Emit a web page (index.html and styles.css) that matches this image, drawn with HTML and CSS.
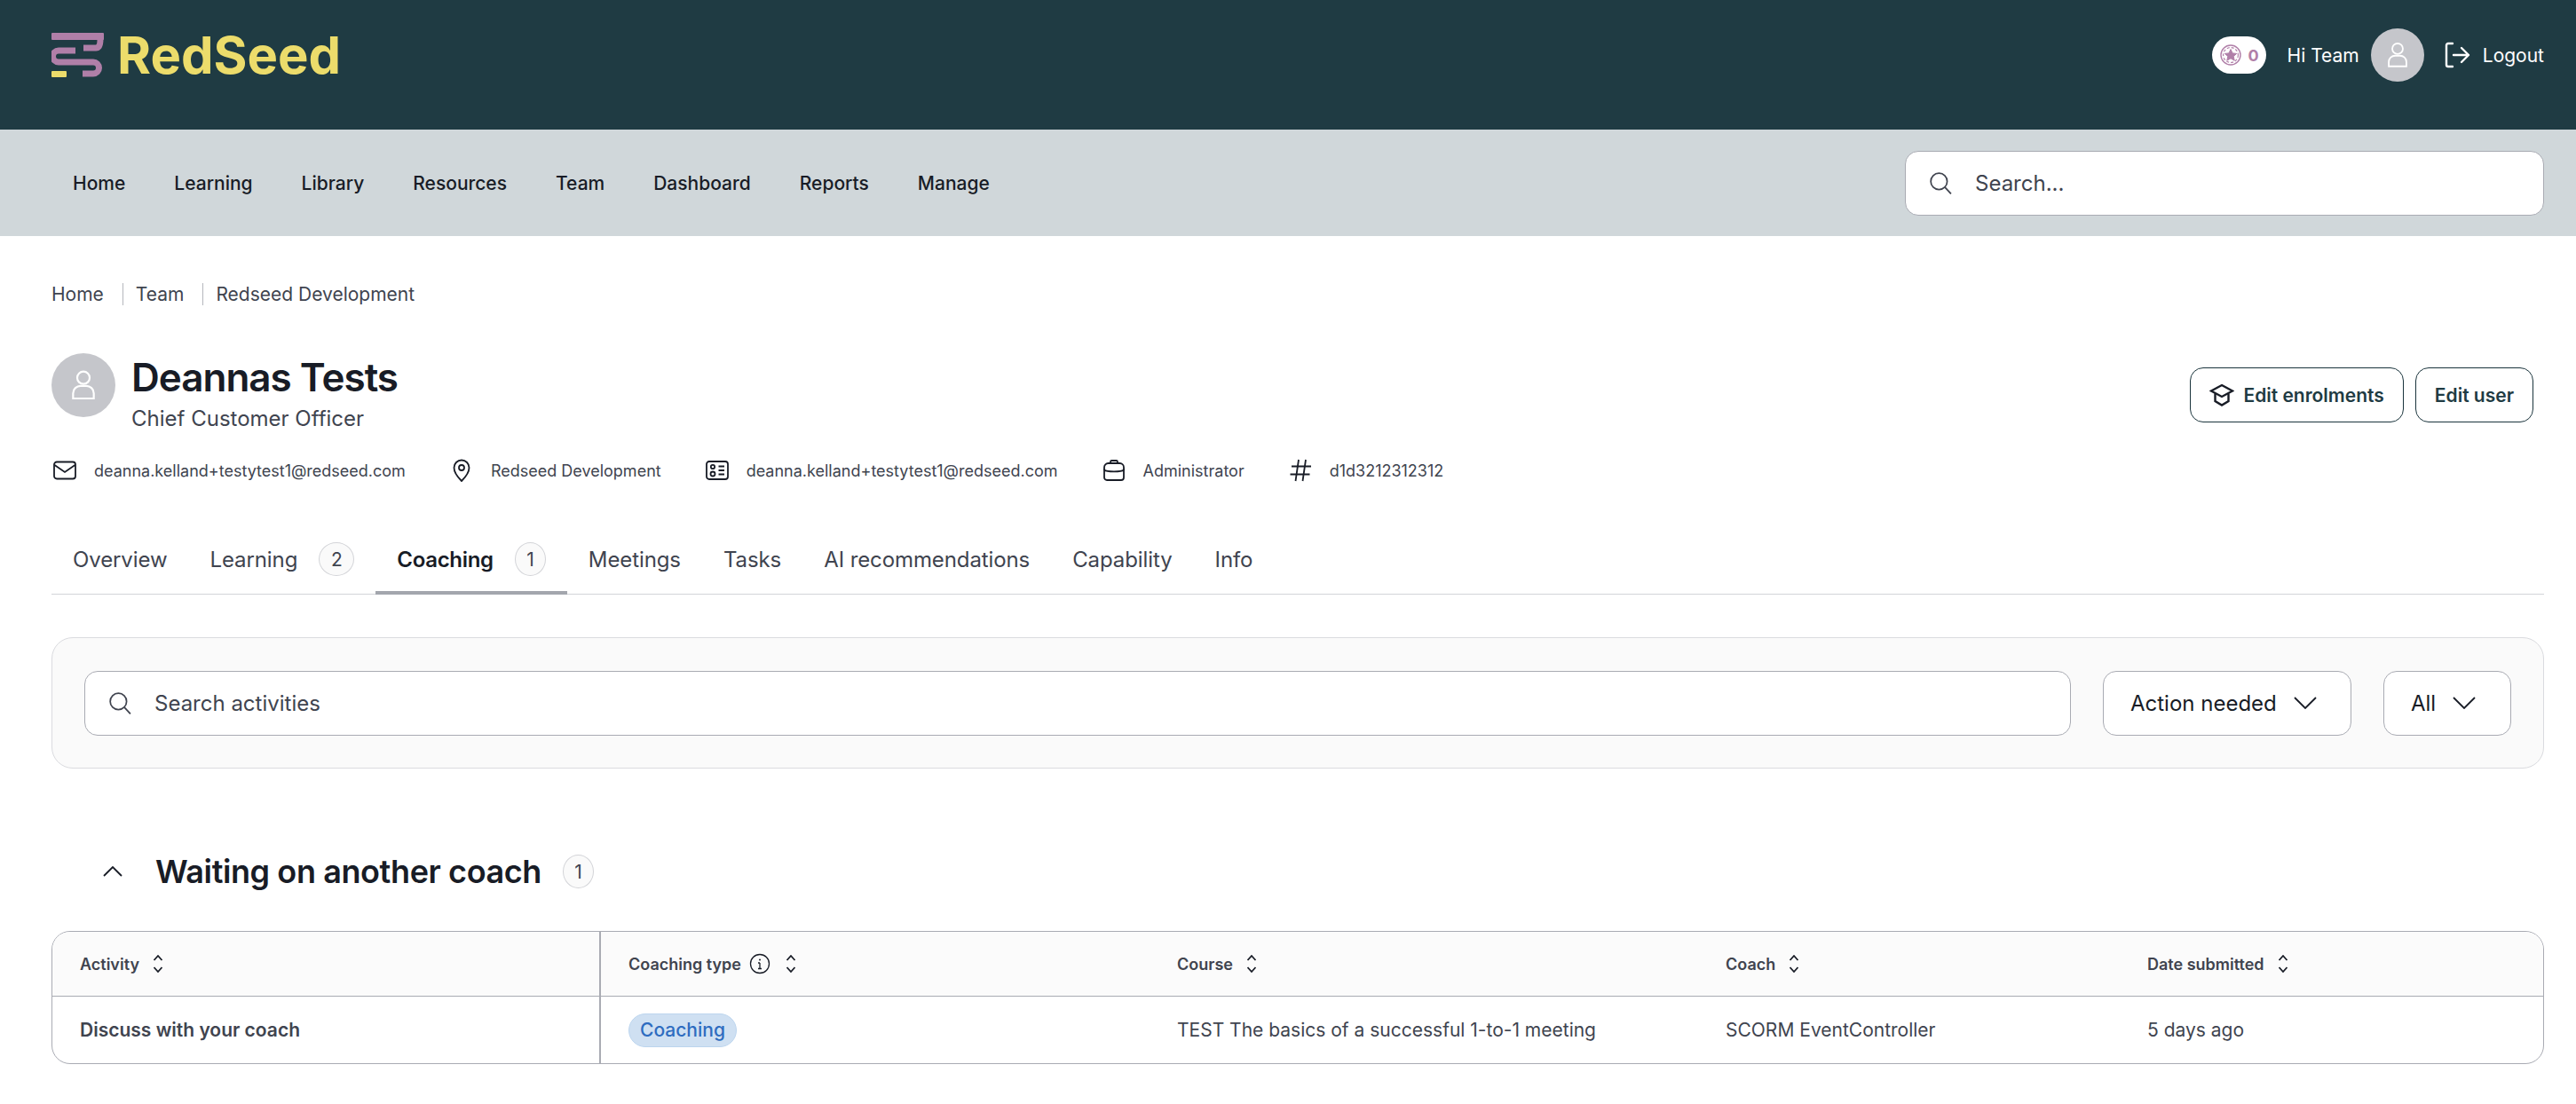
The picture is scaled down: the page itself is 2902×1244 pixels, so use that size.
FILE: index.html
```html
<!DOCTYPE html>
<html lang="en">
<head>
    <meta charset="UTF-8">
    <title>RedSeed - Deannas Tests</title>
    <link rel="stylesheet" href="styles.css">
</head>
<body>
    <header class="topbar">
        <div class="logo">
            <svg class="logo-mark" viewBox="0 0 59 50">
                <rect x="0" y="0" width="59" height="8" rx="1" fill="#b07fa8"/>
                <path d="M36 17 H50 Q55 17 55 7" fill="none" stroke="#b07fa8" stroke-width="7"/>
                <path d="M27 20 H8 a6.5 6.5 0 0 0 0 13 H47 a6.5 6.5 0 0 1 0 13 H35" fill="none" stroke="#b07fa8" stroke-width="7"/>
                <rect x="0" y="43" width="17" height="7" rx="1" fill="#ecdc6b"/>
            </svg>
            <span class="logo-text">RedSeed</span>
        </div>
        <div class="topbar-right">
            <div class="coins">
                <svg class="coin-icon" viewBox="0 0 24 24">
                    <circle cx="12" cy="12" r="11" fill="none" stroke="#b07fa8" stroke-width="1.4"/>
                    <circle cx="12" cy="12" r="8.4" fill="none" stroke="#b07fa8" stroke-width="1.2" stroke-dasharray="3 2"/>
                    <path d="M12 5.5l2 4.4 4.7.5-3.5 3.1 1 4.7-4.2-2.4-4.2 2.4 1-4.7-3.5-3.1 4.7-.5z" fill="#b07fa8"/>
                </svg>
                <span>0</span>
            </div>
            <span class="hi">Hi Team</span>
            <div class="avatar avatar-small">
                <svg viewBox="0 0 24 24"><circle cx="12" cy="7" r="4.2"/><path d="M5 21v-3.500c0-3 2.500-5 5-5h4c2.500 0 5 2 5 5V21z"/></svg>
            </div>
            <a class="logout">
                <svg viewBox="0 0 32 32"><path d="M11 3H6a2 2 0 0 0-2 2v22a2 2 0 0 0 2 2h5"/><path d="M12 16h17M21 8l8 8-8 8"/></svg>
                Logout
            </a>
        </div>
    </header>

    <nav class="mainnav">
        <div class="nav-links">
            <a>Home</a>
            <a>Learning</a>
            <a>Library</a>
            <a>Resources</a>
            <a>Team</a>
            <a>Dashboard</a>
            <a>Reports</a>
            <a>Manage</a>
        </div>
        <div class="search-box nav-search">
            <svg class="search-icon" viewBox="0 0 24 24"><circle cx="10.500" cy="10.500" r="8.500"/><path d="M16.800 16.800L23 23.500"/></svg>
            <span>Search...</span>
        </div>
    </nav>

    <main class="page">
        <div class="breadcrumb">
            <span>Home</span>
            <span>Team</span>
            <span>Redseed Development</span>
        </div>

        <div class="profile">
            <div class="avatar avatar-large">
                <svg viewBox="0 0 24 24"><circle cx="12" cy="7" r="4.2"/><path d="M5 21v-3.500c0-3 2.500-5 5-5h4c2.500 0 5 2 5 5V21z"/></svg>
            </div>
            <div class="profile-name">
                <h1>Deannas Tests</h1>
                <p>Chief Customer Officer</p>
            </div>
            <div class="profile-actions">
                <button class="btn">
                    <svg viewBox="0 0 28 28"><path d="M14 3L26 9.500 14 16 2 9.500z"/><path d="M6.500 12.500v8.500L14 25.500l7.500-4.500v-8.500"/></svg>
                    Edit enrolments
                </button>
                <button class="btn">Edit user</button>
            </div>
        </div>

        <div class="meta">
            <div class="meta-item">
                <svg viewBox="0 0 26 22"><rect x="1" y="1.500" width="24" height="19" rx="3"/><path d="M1.500 5L13 13 24.500 5"/></svg>
                <span>deanna.kelland+testytest1@redseed.com</span>
            </div>
            <div class="meta-item">
                <svg viewBox="0 0 26 26"><path d="M13 25C8 20 4.500 15.500 4.500 10a8.500 8.500 0 0 1 17 0c0 5.500-3.500 10-8.500 15z"/><circle cx="13" cy="10" r="3"/></svg>
                <span>Redseed Development</span>
            </div>
            <div class="meta-item">
                <svg viewBox="0 0 26 22"><rect x="1" y="1" width="24" height="20" rx="3"/><circle cx="8" cy="7" r="2.200"/><circle cx="8" cy="15" r="2.500"/><path d="M14.500 6.500H21M14.500 11H21M14.500 15.500H21"/></svg>
                <span>deanna.kelland+testytest1@redseed.com</span>
            </div>
            <div class="meta-item">
                <svg viewBox="0 0 26 26"><path d="M9 5V3.500A1.500 1.500 0 0 1 10.500 2h5A1.500 1.500 0 0 1 17 3.500V5"/><path d="M2 13V9.500A4.500 4.500 0 0 1 6.500 5h13A4.500 4.500 0 0 1 24 9.500V13"/><path d="M2 12.500c3 2.500 19 2.500 22 0V21a3 3 0 0 1-3 3H5a3 3 0 0 1-3-3z"/></svg>
                <span>Administrator</span>
            </div>
            <div class="meta-item">
                <svg viewBox="0 0 26 26"><path d="M11 1L7.500 25M19 1l-3.500 24M3 8.500h22M1.500 17.500h22"/></svg>
                <span>d1d3212312312</span>
            </div>
        </div>

        <div class="tabs">
            <a class="tab">Overview</a>
            <a class="tab">Learning <span class="count">2</span></a>
            <a class="tab active">Coaching <span class="count count-narrow">1</span></a>
            <a class="tab">Meetings</a>
            <a class="tab">Tasks</a>
            <a class="tab">AI recommendations</a>
            <a class="tab">Capability</a>
            <a class="tab">Info</a>
        </div>

        <div class="filters">
            <div class="search-box filter-search">
                <svg class="search-icon" viewBox="0 0 24 24"><circle cx="10.500" cy="10.500" r="8.500"/><path d="M16.800 16.800L23 23.500"/></svg>
                <span>Search activities</span>
            </div>
            <div class="select select-action">
                Action needed
                <svg viewBox="0 0 26 14"><path d="M1 1l12 12L25 1"/></svg>
            </div>
            <div class="select select-all">
                All
                <svg viewBox="0 0 26 14"><path d="M1 1l12 12L25 1"/></svg>
            </div>
        </div>

        <div class="section-head">
            <svg class="collapse" viewBox="0 0 22 12"><path d="M1 11L11 1l10 10"/></svg>
            <h2>Waiting on another coach</h2>
            <span class="count count-narrow">1</span>
        </div>

        <div class="table">
            <div class="cell head first">Activity <svg class="sort" viewBox="0 0 14 24"><path d="M2.500 8L7 3l4.500 5M2.500 16L7 21l4.500-5"/></svg></div>
            <div class="cell head">Coaching type
                <svg class="info" viewBox="0 0 24 24"><circle cx="12" cy="12" r="10.500"/><path d="M12 11v6.500M10 11h2M10 17.500h4"/><circle class="dot" cx="12" cy="7.500" r="1"/></svg>
                <svg class="sort sort-after-info" viewBox="0 0 14 24"><path d="M2.500 8L7 3l4.500 5M2.500 16L7 21l4.500-5"/></svg>
            </div>
            <div class="cell head">Course <svg class="sort" viewBox="0 0 14 24"><path d="M2.500 8L7 3l4.500 5M2.500 16L7 21l4.500-5"/></svg></div>
            <div class="cell head">Coach <svg class="sort" viewBox="0 0 14 24"><path d="M2.500 8L7 3l4.500 5M2.500 16L7 21l4.500-5"/></svg></div>
            <div class="cell head">Date submitted <svg class="sort" viewBox="0 0 14 24"><path d="M2.500 8L7 3l4.500 5M2.500 16L7 21l4.500-5"/></svg></div>

            <div class="cell first strong">Discuss with your coach</div>
            <div class="cell"><span class="pill">Coaching</span></div>
            <div class="cell">TEST The basics of a successful 1-to-1 meeting</div>
            <div class="cell">SCORM EventController</div>
            <div class="cell">5 days ago</div>
        </div>
    </main>
</body>
</html>
```

FILE: styles.css
```css
* {
    box-sizing: border-box;
}
body {
    margin: 0;
    font-family: Inter, "Noto Sans", sans-serif;
    font-size: 21px;
    color: #40444f;
    background: white;
}
svg {
    flex: none;
    fill: none;
    stroke: currentColor;
}

/* top bar */
.topbar {
    height: 146px;
    background-color: #1f3b43;
    padding: 32px 36px 0 58px;
    display: flex;
    justify-content: space-between;
    align-items: flex-start;
}
.logo {
    height: 60px;
    display: flex;
    align-items: center;
    gap: 15px;
}
.logo-mark {
    width: 59px;
    height: 50px;
    stroke: none;
}
.logo-text {
    font-size: 58px;
    font-weight: 700;
    color: #ecdc6b;
    line-height: 60px;
}
.topbar-right {
    display: flex;
    align-items: center;
    height: 60px;
    color: white;
}
.coins {
    width: 61px;
    height: 42px;
    border-radius: 21px;
    background: white;
    color: #b07fa8;
    font-size: 18px;
    font-weight: 700;
    display: flex;
    align-items: center;
    gap: 8px;
    padding-left: 9px;
    margin-right: 24px;
}
.coin-icon {
    width: 24px;
    height: 24px;
}
.hi {
    margin-right: 13px;
}
.avatar {
    border-radius: 50%;
    background-color: #c5c6cb;
    color: white;
    display: flex;
    align-items: center;
    justify-content: center;
    flex: none;
}
.avatar svg {
    stroke-width: 1.300;
}
.avatar-small {
    width: 60px;
    height: 60px;
}
.avatar-small svg {
    width: 34px;
    height: 34px;
}
.avatar-large {
    width: 72px;
    height: 72px;
}
.avatar-large svg {
    width: 40px;
    height: 40px;
}
.logout {
    display: flex;
    align-items: center;
    gap: 13px;
    margin-left: 21px;
}
.logout svg {
    width: 32px;
    height: 32px;
    stroke-width: 2.400;
    stroke-linecap: round;
    stroke-linejoin: round;
}

/* nav */
.mainnav {
    height: 120px;
    background-color: #d0d7da;
    padding: 0 36px 0 82px;
    display: flex;
    justify-content: space-between;
    align-items: center;
}
.nav-links {
    display: flex;
    gap: 55px;
    font-weight: 500;
    color: #181c26;
}
.search-box {
    height: 73px;
    background: white;
    border: 1px solid #a9abb3;
    border-radius: 15px;
    display: flex;
    align-items: center;
    font-size: 24px;
}
.search-icon {
    width: 26px;
    height: 26px;
    stroke-width: 1.600;
    color: #40444f;
}
.nav-search {
    width: 720px;
    padding-left: 26px;
    gap: 26px;
}

/* page */
.page {
    padding: 53px 36px 0 58px;
}
.breadcrumb {
    display: flex;
    align-items: center;
    height: 25px;
}
.breadcrumb span + span {
    border-left: 1px solid #b5b7bd;
    margin-left: 21px;
    padding-left: 14px;
    line-height: 25px;
}

.profile {
    margin-top: 54px;
    display: flex;
    align-items: flex-start;
    gap: 18px;
}
.profile-name h1 {
    margin: 0;
    font-size: 44px;
    font-weight: 600;
    letter-spacing: -1px;
    line-height: 54px;
    color: #181c26;
}
.profile-name p {
    margin: 2px 0 0;
    font-size: 24px;
    line-height: 36px;
}
.profile-actions {
    margin: 16px 12px 0 auto;
    display: flex;
    gap: 13px;
}
.btn {
    height: 62px;
    padding: 0 21px;
    background: white;
    border: 1px solid #1a343c;
    border-radius: 15px;
    font-family: inherit;
    font-size: 21px;
    font-weight: 600;
    color: #1f3b43;
    display: flex;
    align-items: center;
    gap: 10px;
}
.btn svg {
    width: 28px;
    height: 28px;
    stroke-width: 2.400;
    color: #181c26;
}

.meta {
    margin-top: 25px;
    height: 30px;
    padding-left: 2px;
    display: flex;
    align-items: center;
    gap: 50px;
    font-size: 18px;
}
.meta-item {
    display: flex;
    align-items: center;
    gap: 20px;
}
.meta-item svg {
    width: 26px;
    height: 26px;
    stroke-width: 1.800;
    color: #181c26;
}

/* tabs */
.tabs {
    margin-top: 45px;
    height: 80px;
    border-bottom: 1px solid #d3d4d8;
    display: flex;
    font-size: 24px;
    letter-spacing: -0.100px;
}
.tab {
    height: 80px;
    padding: 0 24px;
    display: flex;
    align-items: center;
    gap: 24px;
}
.tab.active {
    font-weight: 600;
    letter-spacing: -0.300px;
    color: #181c26;
    border-bottom: 4px solid #a3a6ad;
    padding-top: 4px;
}
.count {
    width: 40px;
    height: 38px;
    border-radius: 50%;
    border: 1px solid #d3d4d8;
    background-color: #fafafa;
    font-size: 21px;
    font-weight: 400;
    color: #40444f;
    display: flex;
    align-items: center;
    justify-content: center;
}
.count-narrow {
    width: 35px;
}

/* filters */
.filters {
    margin-top: 48px;
    height: 148px;
    padding: 0 36px;
    background-color: #fafafa;
    border: 1px solid #dadbdf;
    border-radius: 24px;
    display: flex;
    align-items: center;
    gap: 36px;
}
.filter-search {
    flex: 1;
    padding-left: 26px;
    gap: 26px;
}
.select {
    height: 73px;
    background: white;
    border: 1px solid #a9abb3;
    border-radius: 15px;
    padding-left: 30px;
    display: flex;
    align-items: center;
    gap: 19px;
    font-size: 24px;
    color: #181c26;
}
.select svg {
    width: 26px;
    height: 14px;
    stroke-width: 1.800;
}
.select-action {
    width: 280px;
}
.select-all {
    width: 144px;
}

/* section */
.section-head {
    margin-top: 96px;
    height: 40px;
    padding-left: 58px;
    display: flex;
    align-items: center;
}
.collapse {
    width: 22px;
    height: 12px;
    stroke-width: 1.800;
    color: #181c26;
    margin-right: 37px;
}
.section-head h2 {
    margin: 0 24px 0 0;
    font-size: 36px;
    font-weight: 600;
    letter-spacing: -0.400px;
    color: #181c26;
}

/* table */
.table {
    margin-top: 47px;
    border: 1px solid #a9abb3;
    border-radius: 21px;
    overflow: hidden;
    display: grid;
    grid-template-columns: 618px 618px 618px 475px 1fr;
    grid-template-rows: 73px 75px;
}
.cell {
    padding-left: 31px;
    display: flex;
    align-items: center;
}
.cell.head {
    background-color: #fbfbfb;
    border-bottom: 1px solid #a9abb3;
    font-size: 18px;
    font-weight: 600;
    gap: 10px;
}
.cell.first {
    border-right: 2px solid #a9abb3;
}
.strong {
    font-weight: 600;
}
.sort {
    width: 14px;
    height: 24px;
    stroke-width: 1.800;
    color: #181c26;
    margin-left: 4px;
}
.sort-after-info {
    margin-left: 6px;
}
.info {
    width: 24px;
    height: 24px;
    stroke-width: 1.300;
    color: #181c26;
    margin-left: -1px;
}
.info .dot {
    fill: currentColor;
    stroke: none;
}
.pill {
    height: 38px;
    padding: 0 12px;
    border-radius: 19px;
    background-color: #cfe0f2;
    border: 1px solid #bcd5ee;
    color: #2e6cc0;
    font-weight: 500;
    display: flex;
    align-items: center;
}
```
